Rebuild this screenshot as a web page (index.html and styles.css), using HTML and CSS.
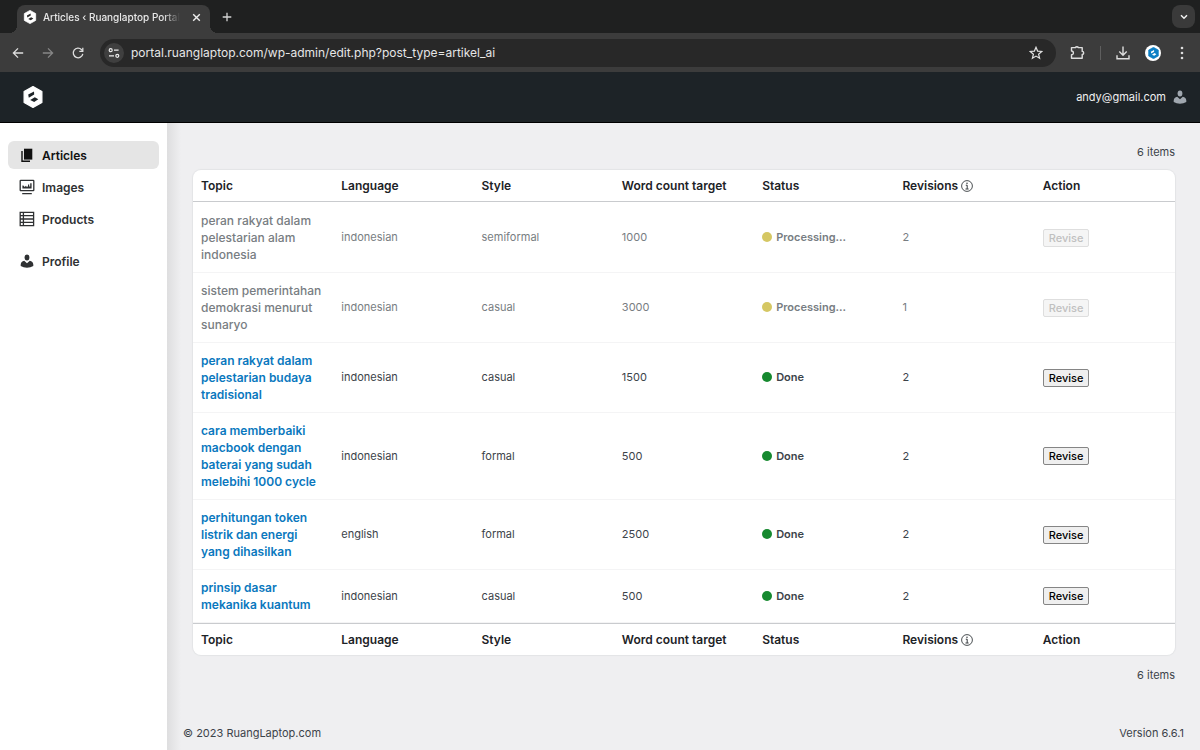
FILE: index.html
```html
<!DOCTYPE html>
<html lang="en">
<head>
<meta charset="utf-8">
<title>Articles ‹ Ruanglaptop Portal</title>
<link rel="stylesheet" href="styles.css">
</head>
<body>
<svg class="defs" aria-hidden="true">
  <symbol id="logo" viewBox="0 0 20 22"><path d="M10 0.6 L18.9 5.6 V16.4 L10 21.4 L1.1 16.4 V5.6Z" fill="currentColor" stroke="currentColor" stroke-width="1.2" stroke-linejoin="round"/><path class="logo-mark" d="M5.2 8.6 L11 5.6 L11.2 8.6 L5.8 11.8Z M7.2 14 L11.8 11.2 L15.3 13.2 L11.2 16Z"/></symbol>
  <symbol id="person" viewBox="0 0 14 14"><ellipse cx="7" cy="3.5" rx="2.4" ry="3" fill="currentColor"/><path d="M4.2 6.8 Q1 7.6 0.7 10.4 V12 Q3.4 13.8 7 13.8 T13.3 12 V10.4 Q13 7.6 9.8 6.8 L7 9.2Z" fill="currentColor"/></symbol>
  <symbol id="info" viewBox="0 0 12 12"><circle cx="6" cy="6" r="5.4" fill="none" stroke="currentColor" stroke-width="0.8"/><circle cx="6" cy="3.3" r="0.7" fill="currentColor"/><path d="M4.8 5.2H6.2V8.8M4.5 9H7.6" fill="none" stroke="currentColor" stroke-width="0.9"/></symbol>
</svg>
<div class="tabstrip">
  <div class="tab">
    <svg class="tab-logo"><use href="#logo"/></svg>
    <span class="tab-title">Articles ‹ Ruanglaptop Portal</span>
    <button class="plain tab-close" aria-label="Close tab"><svg width="9" height="9" viewBox="0 0 9 9"><path d="M1.2 1.2 L7.8 7.8 M7.8 1.2 L1.2 7.8" stroke="#eee" stroke-width="1.4"/></svg></button>
  </div>
  <button class="plain tab-new" aria-label="New tab"><svg width="10" height="10" viewBox="0 0 10 10"><path d="M5 0.7V9.3M0.7 5H9.3" stroke="#d4d4d4" stroke-width="1.3"/></svg></button>
  <button class="plain tab-search" aria-label="Search tabs"><svg width="8" height="6" viewBox="0 0 8 6"><path d="M1 1.2 L4 4.2 L7 1.2" fill="none" stroke="#f2f2f2" stroke-width="1.5"/></svg></button>
</div>
<div class="toolbar">
  <div class="nav-buttons">
    <button class="plain" aria-label="Back"><svg width="12" height="12" viewBox="0 0 12 12"><path d="M11.2 6H1.6M6 1.4 L1.4 6 L6 10.6" fill="none" stroke="#dedede" stroke-width="1.3"/></svg></button>
    <button class="plain" aria-label="Forward"><svg width="12" height="12" viewBox="0 0 12 12"><path d="M0.8 6H10.4M6 1.4 L10.6 6 L6 10.6" fill="none" stroke="#868686" stroke-width="1.3"/></svg></button>
    <button class="plain" aria-label="Reload"><svg width="12" height="12" viewBox="0 0 12 12"><path d="M10.8 6.8 A4.8 4.8 0 1 1 9.6 2.7 L10.6 3.8" fill="none" stroke="#dedede" stroke-width="1.3"/><path d="M10.8 0.8V4.3H7.3" fill="none" stroke="#dedede" stroke-width="1.3"/></svg></button>
  </div>
  <div class="address">
    <button class="plain site-info" aria-label="Site information"><svg width="12" height="10" viewBox="0 0 12 10"><g fill="none" stroke="#eee" stroke-width="1.2"><circle cx="2.7" cy="2.2" r="1.5"/><path d="M6 2.2H10.6M1 7.8H6"/><circle cx="9.3" cy="7.8" r="1.5"/></g></svg></button>
    <input class="url" type="text" aria-label="Address" value="portal.ruanglaptop.com/wp-admin/edit.php?post_type=artikel_ai">
    <button class="plain" aria-label="Bookmark"><svg width="14" height="14" viewBox="0 0 14 14"><path d="M7 1.3 L8.6 5.1 L12.8 5.5 L9.6 8.2 L10.6 12.3 L7 10.1 L3.4 12.3 L4.4 8.2 L1.2 5.5 L5.4 5.1Z" fill="none" stroke="#e2e2e2" stroke-width="1.2"/></svg></button>
  </div>
  <div class="tools">
    <button class="plain" aria-label="Extensions"><svg width="15" height="15" viewBox="0 0 15 15"><path d="M1.5 2.6 H5.4 A1.6 1.2 0 0 1 8.4 2.6 H12.2 V6.4 A1.5 1.5 0 0 1 12.2 9.4 V13.2 H1.5 V9.8 A1.9 1.9 0 0 0 1.5 6Z" fill="none" stroke="#dedede" stroke-width="1.4" stroke-linejoin="round"/></svg></button>
    <span class="divider"></span>
    <button class="plain" aria-label="Downloads"><svg width="14" height="14" viewBox="0 0 14 14"><path d="M7 0.5V9M3.3 5.6 L7 9.2 L10.7 5.6M1 9.3V12.8H13V9.3" fill="none" stroke="#dedede" stroke-width="1.4"/></svg></button>
    <button class="plain avatar" aria-label="Browser profile"><svg class="avatar-logo"><use href="#logo"/></svg></button>
    <button class="plain" aria-label="Menu"><svg width="4" height="14" viewBox="0 0 4 14"><g fill="#dedede"><circle cx="2" cy="2" r="1.3"/><circle cx="2" cy="7" r="1.3"/><circle cx="2" cy="12" r="1.3"/></g></svg></button>
  </div>
</div>
<header class="site-header">
  <a href="#" class="brand" aria-label="Ruanglaptop"><svg class="brand-logo"><use href="#logo"/></svg></a>
  <a href="#" class="account">andy@gmail.com <svg class="account-icon"><use href="#person"/></svg></a>
</header>
<div class="page">
  <nav class="sidebar">
    <a href="#" class="nav-item current"><svg class="nav-icon" viewBox="0 0 16 16"><path d="M5 1.7H13.3V12.6H5Z" fill="currentColor"/><path d="M3 4V14.3H11" fill="none" stroke="currentColor" stroke-width="1.4"/></svg>Articles</a>
    <a href="#" class="nav-item"><svg class="nav-icon" viewBox="0 0 16 16"><rect x="1.2" y="1.4" width="13.6" height="10.2" rx="0.6" fill="none" stroke="currentColor" stroke-width="1.3"/><path d="M3.4 9.6V6.4H4.4L5.6 8L7 6.8L8 8.2L9 7V5.6H10.2V7.6H11.2V4.2H12.6V9.6ZM3.2 14H12.8V15.2H3.2Z" fill="currentColor"/></svg>Images</a>
    <a href="#" class="nav-item"><svg class="nav-icon" viewBox="0 0 16 16"><path d="M1.2 1.4H14.6V14.6H1.2ZM4.4 1.4V14.6M1.2 4.7H14.6M1.2 8H14.6M1.2 11.3H14.6" fill="none" stroke="currentColor" stroke-width="1.3"/></svg>Products</a>
    <a href="#" class="nav-item separate"><svg class="nav-icon" viewBox="-1 -1 16 16"><use href="#person" width="14" height="14"/></svg>Profile</a>
  </nav>
  <main class="content">
    <p class="count">6 items</p>
    <table class="articles">
      <thead><tr><th>Topic</th><th>Language</th><th>Style</th><th>Word count target</th><th>Status</th><th>Revisions <svg class="info"><use href="#info"/></svg></th><th>Action</th></tr></thead>
      <tbody>
        <tr class="pending"><td class="topic">peran rakyat dalam pelestarian alam indonesia</td><td>indonesian</td><td>semiformal</td><td>1000</td><td class="status">Processing...</td><td>2</td><td><button class="revise" disabled>Revise</button></td></tr>
        <tr class="pending"><td class="topic">sistem pemerintahan demokrasi menurut sunaryo</td><td>indonesian</td><td>casual</td><td>3000</td><td class="status">Processing...</td><td>1</td><td><button class="revise" disabled>Revise</button></td></tr>
        <tr><td class="topic"><a href="#">peran rakyat dalam pelestarian budaya tradisional</a></td><td>indonesian</td><td>casual</td><td>1500</td><td class="status">Done</td><td>2</td><td><button class="revise">Revise</button></td></tr>
        <tr><td class="topic"><a href="#">cara memberbaiki macbook dengan baterai yang sudah melebihi 1000 cycle</a></td><td>indonesian</td><td>formal</td><td>500</td><td class="status">Done</td><td>2</td><td><button class="revise">Revise</button></td></tr>
        <tr><td class="topic"><a href="#">perhitungan token listrik dan energi yang dihasilkan</a></td><td>english</td><td>formal</td><td>2500</td><td class="status">Done</td><td>2</td><td><button class="revise">Revise</button></td></tr>
        <tr><td class="topic"><a href="#">prinsip dasar mekanika kuantum</a></td><td>indonesian</td><td>casual</td><td>500</td><td class="status">Done</td><td>2</td><td><button class="revise">Revise</button></td></tr>
      </tbody>
      <tfoot><tr><th>Topic</th><th>Language</th><th>Style</th><th>Word count target</th><th>Status</th><th>Revisions <svg class="info"><use href="#info"/></svg></th><th>Action</th></tr></tfoot>
    </table>
    <p class="count">6 items</p>
    <footer class="footer"><span>© 2023 RuangLaptop.com</span><span>Version 6.6.1</span></footer>
  </main>
</div>
</body>
</html>
```
FILE: styles.css
```css
* { box-sizing: border-box; }

body {
  margin: 0;
  min-height: 100vh;
  display: flex;
  flex-direction: column;
  font: 11px/17px Inter, "Liberation Sans", sans-serif;
  color: #3c434a;
  background: #efeff1;
}

a { color: inherit; text-decoration: none; }
p { margin: 0; }
svg { display: block; flex: none; }
.defs { position: absolute; width: 0; height: 0; }
.logo-mark { fill: var(--mark); }

.plain {
  display: flex;
  align-items: center;
  justify-content: center;
  padding: 0;
  border: 0;
  background: none;
}

/* Browser chrome */
.tabstrip {
  display: flex;
  align-items: center;
  height: 33px;
  padding: 0 5px 0 17px;
  background: #1f2020;
}

.tab {
  position: relative;
  align-self: flex-end;
  display: flex;
  align-items: center;
  width: 193px;
  height: 28px;
  padding: 0 9px 4px 6px;
  border-radius: 8px 8px 0 0;
  background: #3c3c3c;
}

.tab::before,
.tab::after {
  content: "";
  position: absolute;
  bottom: 0;
  width: 8px;
  height: 8px;
}
.tab::before { left: -8px; background: radial-gradient(circle at 0 0, transparent 8px, #3c3c3c 8px); }
.tab::after { right: -8px; background: radial-gradient(circle at 100% 0, transparent 8px, #3c3c3c 8px); }

.tab-logo { width: 14px; height: 14px; color: #fff; --mark: #2b2b2b; }

.tab-title {
  flex: 1;
  margin: 0 12px 0 6px;
  overflow: hidden;
  white-space: nowrap;
  font-size: 10px;
  font-weight: 500;
  color: #e8e8e8;
  -webkit-mask-image: linear-gradient(90deg, #000 88%, transparent);
  mask-image: linear-gradient(90deg, #000 88%, transparent);
}

.tab-new { width: 34px; }

.tab-search {
  width: 23px;
  height: 23px;
  margin-left: auto;
  border-radius: 8px;
  background: #3a3a3a;
}

.toolbar {
  display: flex;
  align-items: center;
  height: 39px;
  padding: 0 16px 0 12px;
  background: #3c3c3c;
}

.nav-buttons { display: flex; gap: 18px; margin-right: 16px; }

.address {
  flex: 1;
  display: flex;
  align-items: center;
  height: 28px;
  padding: 0 13px 0 4px;
  border-radius: 14px;
  background: #282828;
}

.site-info { width: 20px; height: 20px; border-radius: 50%; background: #3f3f3f; }

.url {
  flex: 1;
  padding: 0 7px;
  border: 0;
  background: none;
  font: 12px/17px Inter, sans-serif;
  color: #e6e6e6;
}

.tools { display: flex; align-items: center; gap: 15px; margin-left: 14px; }
.divider { width: 1px; height: 14px; background: #5f5f5f; }
.avatar { width: 16px; height: 16px; margin-right: 4px; border-radius: 50%; background: #fff; }
.avatar-logo { width: 11px; height: 12px; color: #0d7fc4; --mark: #fff; }

/* Site header */
.site-header {
  display: flex;
  align-items: center;
  justify-content: space-between;
  height: 51px;
  padding: 0 13px 0 23px;
  border-bottom: 1px solid #000;
  background: #1d2327;
}

.brand-logo { width: 20px; height: 22px; color: #fff; --mark: #1d2327; }
.account { display: flex; align-items: center; gap: 7px; color: #f0f0f1; }
.account-icon { width: 14px; height: 14px; color: #a0a7af; }

.page { flex: 1; display: flex; }

.sidebar {
  width: 167px;
  padding: 18px 8px;
  display: flex;
  flex-direction: column;
  gap: 4px;
  background: #fff;
}

.nav-item {
  display: flex;
  align-items: center;
  gap: 7px;
  height: 28px;
  padding: 0 11px;
  border-radius: 6px;
  font-size: 12px;
  font-weight: 600;
  color: #2f3133;
}
.nav-item.current { background: #e5e5e5; color: #111; }
.nav-item.separate { margin-top: 10px; }
.nav-icon { width: 16px; height: 16px; }

.content {
  flex: 1;
  display: flex;
  flex-direction: column;
  padding: 21px 25px 8px 26px;
  background: linear-gradient(90deg, #dededf, #efeff1 14px);
}

.count { text-align: right; }

.articles {
  width: 100%;
  margin: 9px 0 12px;
  table-layout: fixed;
  border-spacing: 0;
  border-radius: 8px;
  background: #fff;
  box-shadow: 0 0 1px 1px #e3e4e6;
}

.articles th,
.articles td { text-align: left; vertical-align: middle; }

.articles th { padding: 7px 8px; font-size: 12px; font-weight: 600; color: #1d2327; white-space: nowrap; }
.articles td { padding: 9px 8px; border-bottom: 1px solid #f4f4f5; }
.articles thead th { border-bottom: 1px solid #c9cbce; }
.articles tfoot th { border-top: 1px solid #c9cbce; }
.articles tbody tr:first-child td { padding-top: 10px; }
.info { display: inline-block; width: 12px; height: 12px; vertical-align: -2px; }

.articles .topic { font-size: 12px; font-weight: 500; }
.topic a { font-weight: 600; color: #0a78be; }
.pending { color: #787d82; }

.status { font-weight: 600; }
.status::before {
  content: "";
  display: inline-block;
  width: 10px;
  height: 10px;
  margin-right: 4px;
  border-radius: 50%;
  vertical-align: -1px;
  background: #16892f;
}
.pending .status::before,
.pending.status::before { background: #d5c763; }

.revise {
  display: block;
  height: 18px;
  padding: 0 5px;
  border: 1px solid #858585;
  border-radius: 2px;
  background: #efefef;
  font: 500 11px/16px Inter, sans-serif;
  color: #000;
}
.revise:disabled { border-color: #dedede; background: #f5f5f5; color: #c0c0c0; }

.footer {
  display: flex;
  justify-content: space-between;
  margin: auto -9px 0 -10px;
}
```
